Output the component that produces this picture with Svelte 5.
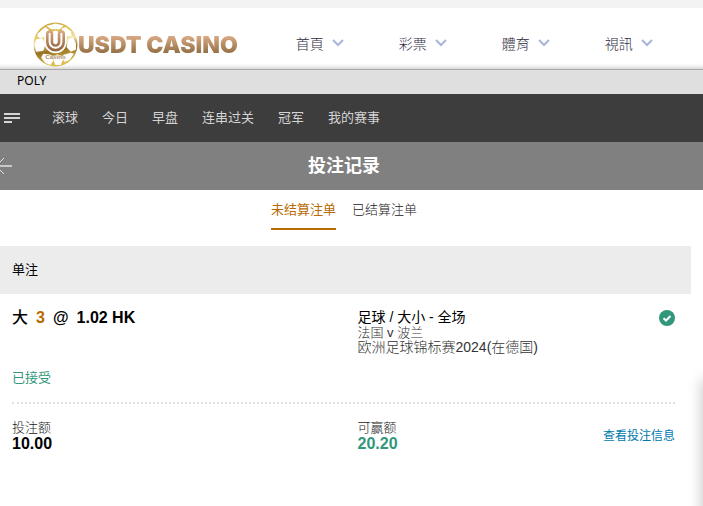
<script>
  const siteNav = ["首頁", "彩票", "體育", "視訊"];
  const sportNav = ["滚球", "今日", "早盘", "连串过关", "冠军", "我的赛事"];

  let tabs = ["未结算注单", "已结算注单"];
  let activeTab = 0;

  const bet = {
    pick: "大",
    line: "3",
    odds: "1.02 HK",
    market: "足球 / 大小 - 全场",
    match: "法国 v 波兰",
    league: "欧洲足球锦标赛2024(在德国)",
    status: "已接受",
    stake: "10.00",
    win: "20.20",
  };
</script>

<div class="page">
  <header class="site-header">
    <a class="logo" href="#home">
      <svg class="ball" viewBox="0 0 44 44" aria-hidden="true">
        <defs>
          <linearGradient id="gold" x1="0" y1="0" x2="0.2" y2="1">
            <stop offset="0" stop-color="#c39a35" />
            <stop offset="0.3" stop-color="#dfc458" />
            <stop offset="0.5" stop-color="#f3e7b0" />
            <stop offset="0.7" stop-color="#957022" />
            <stop offset="1" stop-color="#dcc050" />
          </linearGradient>
          <linearGradient id="bronze" x1="0" y1="0" x2="0" y2="1">
            <stop offset="0" stop-color="#d6a67e" />
            <stop offset="1" stop-color="#93653f" />
          </linearGradient>
        </defs>
        <circle cx="22" cy="22" r="21.500" fill="url(#gold)" />
        <g fill="#fff">
          <path d="M13 4L22 1.500L30 3.500L26 7L18 7Z" />
          <path d="M5 11L12 5L16 8L13 14L7 16L4 14Z" />
          <path d="M28 6L32 5L37 9L38 14L32 14L29 10Z" />
          <path d="M3 17L9 16L12 22L10 28L3 29L1.500 22Z" />
          <path d="M34 17L39 15L42 21L42 27L37 29L33 25Z" />
          <path d="M10 31L17 32L20 38L17 42L12 40L8 35Z" />
          <path d="M21 34L27 33L30 36L27 42L22 42L20 38Z" />
          <path d="M30 32L37 30L40 31L36 37L31 39L29 36Z" />
        </g>
        <g fill="none">
          <path d="M14.500 12V19.500a7.500 7.500 0 0 0 15 0V12M22 12V20" stroke="#fff" stroke-width="7" stroke-linecap="round" />
          <path d="M18.500 11.500a2 2 0 0 0-4.500 0V19.500a8 8 0 0 0 16 0V11.500a2 2 0 0 0-4.500 0V19.500a3.500 3.500 0 0 1-7 0Z" stroke="url(#bronze)" stroke-width="2.600" />
        </g>
        <text x="22" y="36" text-anchor="middle">Casino</text>
      </svg>
      <span class="brand">USDT CASINO</span>
    </a>
    <nav class="site-nav">
      {#each siteNav as item}
        <a href="#site">
          {item}
          <svg width="12" height="8" viewBox="0 0 12 8" aria-hidden="true">
            <path d="M1 1L6 6L11 1" fill="none" stroke="#a9b6d6" stroke-width="2" />
          </svg>
        </a>
      {/each}
    </nav>
  </header>

  <div class="provider">POLY</div>

  <nav class="sport-nav">
    <button class="menu" aria-label="菜单">
      <svg width="16" height="10" viewBox="0 0 16 10" aria-hidden="true">
        <path d="M0 1H16M0 5H16M0 9H8" stroke="#d4d4d4" stroke-width="2" />
      </svg>
    </button>
    {#each sportNav as item}
      <a href="#sport">{item}</a>
    {/each}
  </nav>

  <div class="title-bar">
    <button class="back" aria-label="返回">
      <svg width="12" height="16" viewBox="0 0 12 16" aria-hidden="true">
        <path d="M12 8H-4" fill="none" stroke="#c9c9c9" stroke-width="2" />
        <path d="M4 0L-4 8L4 16" fill="none" stroke="#e6e6e6" stroke-width="1" />
      </svg>
    </button>
    <h1>投注记录</h1>
  </div>

  <div class="tabs">
    {#each tabs as tab, i}
      <button class:active={i === activeTab} on:click={() => (activeTab = i)}>{tab}</button>
    {/each}
  </div>

  <main class="bets">
    <h2>单注</h2>
    <div class="row">
      <div class="cell pick">
        <span>{bet.pick}</span>
        <span class="line">{bet.line}</span>
        <span>@</span>
        <span>{bet.odds}</span>
      </div>
      <div class="cell event">
        <div>
          <div class="market">{bet.market}</div>
          <div class="match">{bet.match}</div>
          <div class="league">{bet.league}</div>
        </div>
        <svg width="16" height="16" viewBox="0 0 16 16" aria-hidden="true">
          <circle cx="8" cy="8" r="8" fill="#31977a" />
          <path d="M4.500 8.200L7 10.500L11.500 6" fill="none" stroke="#fff" stroke-width="2" />
        </svg>
      </div>
    </div>
    <div class="status">{bet.status}</div>
    <div class="row totals">
      <div class="cell">
        <div class="label">投注额</div>
        <div class="amount">{bet.stake}</div>
      </div>
      <div class="cell win">
        <div>
          <div class="label">可赢额</div>
          <div class="amount green">{bet.win}</div>
        </div>
        <a href="#detail">查看投注信息</a>
      </div>
    </div>
  </main>

  <aside class="drawer"></aside>
</div>

<style>
  :global(body) {
    background: #fff;
  }

  .page {
    position: relative;
    min-height: 100vh;
    overflow: hidden;
    font-family: "Liberation Sans", "Noto Sans CJK SC", sans-serif;
    font-size: 13px;
    color: #000;
  }

  a {
    color: inherit;
    text-decoration: none;
  }

  button {
    padding: 0;
    border: 0;
    background: none;
    font: inherit;
    color: inherit;
    cursor: pointer;
  }

  svg {
    display: block;
    flex: none;
  }

  h1,
  h2 {
    margin: 0;
  }

  .site-header {
    display: flex;
    align-items: center;
    gap: 58px;
    height: 61px;
    padding-left: 33px;
    border-top: 8px solid #f3f3f3;
    box-shadow: inset 0 -6px 5px -5px #c4c4c4;
  }

  .logo {
    display: flex;
    align-items: center;
    padding-top: 11px;
  }

  .ball {
    width: 45px;
    height: 45px;
  }

  .ball text {
    font-size: 6px;
    font-weight: bold;
    fill: #b08a6a;
    stroke: #fff;
    stroke-width: 1px;
    paint-order: stroke;
  }

  .brand {
    padding-top: 2px;
    font-family: Inter, sans-serif;
    font-size: 23px;
    font-weight: 900;
    line-height: 24px;
    white-space: nowrap;
    color: transparent;
    background: linear-gradient(#d9a982 20%, #8f6c42 90%);
    background-clip: text;
  }

  .site-nav {
    display: flex;
    gap: 55px;
    padding-top: 8px;
    font-family: "Noto Sans CJK TC", sans-serif;
    font-size: 14px;
    font-weight: 300;
    line-height: 20px;
    color: #2f2a44;
  }

  .site-nav a {
    display: flex;
    align-items: center;
    gap: 8px;
    white-space: nowrap;
  }

  .provider {
    padding: 0 17px 2px;
    border-top: 1px solid #aaa;
    background: #dfdfdf;
    font-family: "Noto Sans", sans-serif;
    font-size: 12px;
    line-height: 22px;
  }

  .sport-nav {
    display: flex;
    align-items: center;
    gap: 24px;
    height: 48px;
    padding-left: 4px;
    background: #3d3d3d;
    color: #d4d4d4;
    line-height: 18px;
    white-space: nowrap;
  }

  .menu {
    margin-right: 8px;
  }

  .title-bar {
    display: flex;
    align-items: center;
    height: 48px;
    padding-right: 27px;
    background: #808080;
    color: #fff;
  }

  .title-bar h1 {
    flex: 1;
    font-size: 18px;
    line-height: 24px;
    text-align: center;
  }

  .tabs {
    display: flex;
    justify-content: center;
    gap: 16px;
    padding: 0 15px 16px 0;
    font-weight: 300;
    color: #222;
  }

  .tabs button {
    height: 40px;
    padding-bottom: 2px;
    border-bottom: 2px solid transparent;
  }

  .tabs .active {
    border-bottom-color: #b86a00;
    font-weight: 400;
    color: #b86a00;
  }

  .bets {
    margin-right: 12px;
  }

  .bets h2 {
    padding: 0 12px;
    background: #ececec;
    font-size: 13px;
    font-weight: 400;
    line-height: 48px;
  }

  .row {
    display: grid;
    grid-template-columns: 1fr 1fr;
  }

  .cell {
    padding-left: 12px;
  }

  .pick {
    display: flex;
    gap: 8px;
    padding-top: 14px;
    font-size: 16px;
    font-weight: bold;
    line-height: 20px;
  }

  .pick span:first-child {
    font-weight: 500;
  }

  .pick .line {
    color: #b86a00;
  }

  .event,
  .win {
    display: flex;
    justify-content: space-between;
    padding-right: 16px;
  }

  .event {
    padding-top: 16px;
    line-height: 15px;
    color: #333;
  }

  .market,
  .league {
    font-size: 14px;
  }

  .market {
    color: #000;
  }

  .match,
  .league,
  .label {
    font-weight: 300;
  }

  .status {
    margin: 13px 16px 0 12px;
    padding-bottom: 14px;
    border-bottom: 2px dotted #e0e0e0;
    line-height: 20px;
    color: #31977a;
  }

  .totals {
    padding-top: 16px;
    line-height: 16px;
  }

  .label {
    color: #222;
  }

  .amount {
    font-size: 16px;
    font-weight: bold;
  }

  .green {
    color: #31977a;
  }

  .win {
    align-items: center;
  }

  .win a {
    font-size: 12px;
    color: #007aae;
  }

  .drawer {
    position: absolute;
    top: 380px;
    bottom: -20px;
    left: 100%;
    width: 200px;
    box-shadow: 0 0 14px rgba(0, 0, 0, 0.25);
  }
</style>
